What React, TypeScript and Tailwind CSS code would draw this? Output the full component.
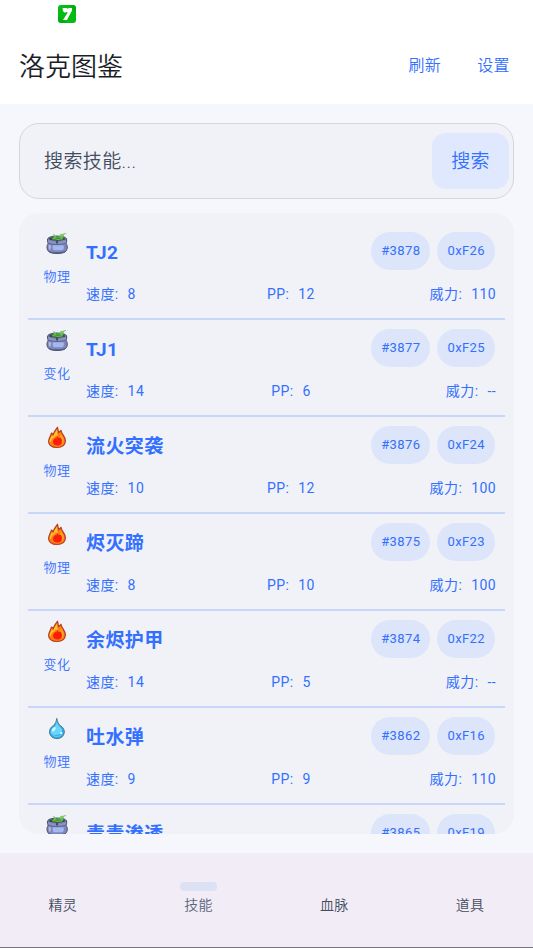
import { useState } from "react";
import clsx from "clsx";

type Element = "poison" | "fire" | "water";

type Skill = {
  id: number;
  name: string;
  element: Element;
  category: string;
  speed: number;
  pp: number;
  power: number | null;
};

const SKILLS: Skill[] = [
  { id: 3878, name: "TJ2", element: "poison", category: "物理", speed: 8, pp: 12, power: 110 },
  { id: 3877, name: "TJ1", element: "poison", category: "变化", speed: 14, pp: 6, power: null },
  { id: 3876, name: "流火突袭", element: "fire", category: "物理", speed: 10, pp: 12, power: 100 },
  { id: 3875, name: "烬灭蹄", element: "fire", category: "物理", speed: 8, pp: 10, power: 100 },
  { id: 3874, name: "余烬护甲", element: "fire", category: "变化", speed: 14, pp: 5, power: null },
  { id: 3862, name: "吐水弹", element: "water", category: "物理", speed: 9, pp: 9, power: 110 },
  { id: 3865, name: "毒毒渗透", element: "poison", category: "物理", speed: 8, pp: 10, power: 90 },
];

const TABS = ["精灵", "技能", "血脉", "道具"];

function toHex(id: number) {
  return `0x${id.toString(16).toUpperCase()}`;
}

function AppBadge() {
  return (
    <svg aria-hidden="true" className="size-[18px]" viewBox="0 0 18 18">
      <rect width="18" height="18" rx="3" fill="#05bb14" />
      <path d="M0 11 9 18H3a3 3 0 0 1-3-3zM12 0h3a3 3 0 0 1 3 3v5z" fill="#089c14" opacity=".5" />
      <path d="M4.500 3h4l1 .8L11 3h3v2.600L9 15H5l4.800-7.400-1.300-.7-1.600.8L5 6.200z" fill="#fff" />
    </svg>
  );
}

function PoisonIcon() {
  return (
    <svg aria-hidden="true" className="size-6" viewBox="0 0 24 24">
      <path
        d="M2.600 6.800C4.500 3.200 19.800 3 21.600 6.800v3l-.6 1.400c2.200 3.200 1.400 7-1 8.800-3.400 2-12.400 2-15.800 0-2.400-1.800-3-5.600-1-8.800l-.6-1.400z"
        fill="#7c87bd"
        stroke="#484d66"
      />
      <path d="M8 13.200h10.500c.9 2.600.2 4.200-1.200 5H8.800c-1.200-1.300-1.600-3.300-.8-5z" fill="#a3b8f0" />
      <path d="M3.800 13c-.6 2.200 0 4.200 1.500 5.400l.9-5z" fill="#b6b8dc" />
      <path d="M4 19c3.400 1.800 12.600 1.800 16 0-.3 1.800-3 2.200-8 2.200S4.300 20.800 4 19z" fill="#555b7c" />
      <path d="M3.200 8c3 2.600 14.800 2.800 17.800 0v2.200c-3.200 2-14.600 2-17.800 0z" fill="#8d95c2" />
      <path d="M3.400 11.200c4 1.800 13.400 1.800 17.400 0" fill="none" stroke="#565d82" strokeWidth=".8" />
      <path d="M3.600 7c2-2.700 14.800-2.900 17 0-2 2.200-15 2.400-17 0z" fill="#33473a" />
      <path d="M6.500 7 9 5 8 1.800l2.200 1.300 1 2 2-.8 1.700.5.7-1.200L15 2l3-.3L20.500 1l1 .8-2.700 1 .2 1-1.500 1.800.8 1.600c-3.300 1-8.500.9-11.800-.2z" fill="#6acb4c" opacity=".9" />
      <path d="M9 6.500 12.500 5l4.300 1.200-2.600.8z" fill="#42932f" />
      <path d="M11.300 8.600h1.600l.3 2-1.100 1.600-1.200-1.600z" fill="#454b66" />
    </svg>
  );
}

function FireIcon() {
  return (
    <svg aria-hidden="true" className="size-6" viewBox="0 0 24 24">
      <path
        d="M12.400 1.200c.9 1.800.4 3.500 1.400 5.400l2.200-2.300c-.1 3.400 4.600 5.700 4.400 10.700-.3 4.300-3.400 6.500-8.300 6.500s-8.300-2-8.500-6c0-3 2-5 2.900-8.500l2 1.500c.2-3.200 2.600-4.500 3.900-7.300z"
        fill="#ff7d0a"
        stroke="#b23c2a"
        strokeLinejoin="round"
        strokeWidth="1.200"
      />
      <path d="M12 3.500c.4 2.600-.2 4.500 1.300 6.200l-1 .9-1.300-1.300-2 2.700-1.500.3-1.900 3.800-.9.500c-.4-2.800 1.300-4.400 1.900-7.100l1.900 1.200c.2-3 2.400-4.500 3.500-7.200z" fill="#ffc72c" />
      <path d="M15.800 6.800c.4 2.600 3.200 4.700 3 8.200-.2 2-1.200 3.200-2.300 3.800 1.200-2.600.6-5.600-1.500-7.400z" fill="#ffa51c" />
      <path d="m12.200 9.700 1.500 2.400 1.900-.4c2 2.500 1.700 5.800-.8 7.300-2.200.9-5 .7-6.300-1.200-1.200-2.300 0-4.600 1.900-5.700l.9.400z" fill="#fb1c10" />
    </svg>
  );
}

function WaterIcon() {
  return (
    <svg aria-hidden="true" className="size-6" viewBox="0 0 24 24">
      <path
        d="M11.800 1.400c.7 3.500 1.500 5.600 3.700 7.300 3 1.900 4.200 4.500 3.700 7.400-.6 3.500-3.400 5.500-7.200 5.500s-7-2.300-7.400-5.800C4.200 12.600 5.600 10.200 8.500 8.500c2-1.800 2.700-3.900 3.300-7.100z"
        fill="#31adea"
        stroke="#55788f"
        strokeLinejoin="round"
      />
      <path d="M11.800 4c.4 2.500 1.200 4.300 2.900 5.800 2.600 1.600 3 4.300 1.500 6.300-2.200 2.500-7.300 2.600-10.300.4-.4-2.900.8-5 3.800-6.900C11 8.200 11.500 6.200 11.800 4z" fill="#68d6fb" />
      <path d="M6.900 14.500c-.4-2.200.8-3.800 2.900-4.600 1.600.5 1 2.300-.2 3.400-.8.900-1.700 1.500-2.700 1.200zM15.200 15h2v2.200h-2z" fill="#d8faff" />
      <path d="M7.500 18c2.600 1.400 6.200 1.400 9 0-1.300 2-7.500 2.300-9 0z" fill="#7ce4ff" />
    </svg>
  );
}

const ELEMENT_ICONS: Record<Element, () => React.JSX.Element> = {
  poison: PoisonIcon,
  fire: FireIcon,
  water: WaterIcon,
};

function Tag({ children }: { children: string }) {
  return (
    <span className="flex h-[38px] items-center rounded-[19px] bg-[#dce5f9] px-[10px] text-[13px] font-normal">
      {children}
    </span>
  );
}

function Stat({ label, value }: { label: string; value: number | string }) {
  return (
    <div className="flex gap-[9px]">
      <dt>{label}:</dt>
      <dd>{value}</dd>
    </div>
  );
}

function SkillRow({ skill }: { skill: Skill }) {
  const Icon = ELEMENT_ICONS[skill.element];

  return (
    <li className="flex h-[97px] shrink-0 gap-[9px] border-b-2 border-[#c8d6fa] pt-[9px] pr-[9px] pl-[9px] text-[#3370ff]">
      <div className="flex w-10 shrink-0 flex-col items-center gap-[11px]">
        <Icon />
        <span className="text-[13px] leading-5">{skill.category}</span>
      </div>
      <div className="flex min-w-0 flex-1 flex-col gap-[14px]">
        <div className="flex items-center gap-[7px] pr-px">
          <h2 className="min-w-0 flex-1 truncate pt-1 text-[19px] leading-7 font-bold">{skill.name}</h2>
          <Tag>{`#${skill.id}`}</Tag>
          <Tag>{toHex(skill.id)}</Tag>
        </div>
        <dl className="grid grid-cols-3 text-sm leading-5 font-normal">
          <Stat label="速度" value={skill.speed} />
          <div className="flex justify-center">
            <Stat label="PP" value={skill.pp} />
          </div>
          <div className="flex justify-end">
            <Stat label="威力" value={skill.power ?? "--"} />
          </div>
        </dl>
      </div>
    </li>
  );
}

export default function App() {
  const [query, setQuery] = useState("");
  const [activeTab, setActiveTab] = useState("技能");

  const skills = SKILLS.filter((skill) => skill.name.includes(query));

  return (
    <div className="flex h-screen flex-col bg-[#f5f7fc] font-[Roboto,'Noto_Sans_CJK_SC',sans-serif] font-[350] tracking-wide">
      <div className="flex h-7 shrink-0 items-center bg-white px-[58px]">
        <AppBadge />
      </div>
      <header className="flex h-19 shrink-0 items-center justify-between bg-white pr-[23px] pl-[19px]">
        <h1 className="pt-0.5 text-[26px] tracking-normal text-[#1b1e28]">洛克图鉴</h1>
        <div className="flex gap-9 text-base text-[#3370ff]">
          <button type="button">刷新</button>
          <button type="button">设置</button>
        </div>
      </header>

      <main className="flex min-h-0 flex-1 flex-col gap-[14px] px-[19px] pt-[19px] pb-[19px]">
        <form
          className="flex h-19 shrink-0 items-center rounded-[20px] border border-[#d5d6da] bg-[#f1f2f7] pr-1 pl-6"
          onSubmit={(event) => event.preventDefault()}
        >
          <input
            aria-label="搜索技能"
            className="min-w-0 flex-1 bg-transparent pt-0.5 text-[19px] text-[#434c60] outline-none placeholder:text-[#434c60]"
            onChange={(event) => setQuery(event.target.value)}
            placeholder="搜索技能..."
            value={query}
          />
          <button
            className="h-14 rounded-[14px] bg-[#dfe8fd] px-[19px] pt-0.5 text-[19px] text-[#3370ff]"
            type="submit"
          >
            搜索
          </button>
        </form>

        <ul className="flex min-h-0 flex-1 flex-col overflow-y-auto rounded-[20px] bg-[#f1f2f8] px-[9px] pt-[10px] [scrollbar-width:none]">
          {skills.map((skill) => (
            <SkillRow key={skill.id} skill={skill} />
          ))}
        </ul>
      </main>

      <nav className="grid h-[95px] shrink-0 grid-cols-4 gap-[10px] border-b border-[#77747b] bg-[#f2ecf7]">
        {TABS.map((tab) => (
          <button
            className={clsx(
              "flex flex-col items-center gap-1 pt-[29px] text-sm leading-5",
              tab === activeTab ? "text-[#5a6780]" : "text-[#434c5e]"
            )}
            key={tab}
            onClick={() => setActiveTab(tab)}
            type="button"
          >
            <span className={clsx("h-[9px] w-[37px] rounded-[4px]", tab === activeTab && "bg-[#dce2f3]")} />
            {tab}
          </button>
        ))}
      </nav>
    </div>
  );
}
